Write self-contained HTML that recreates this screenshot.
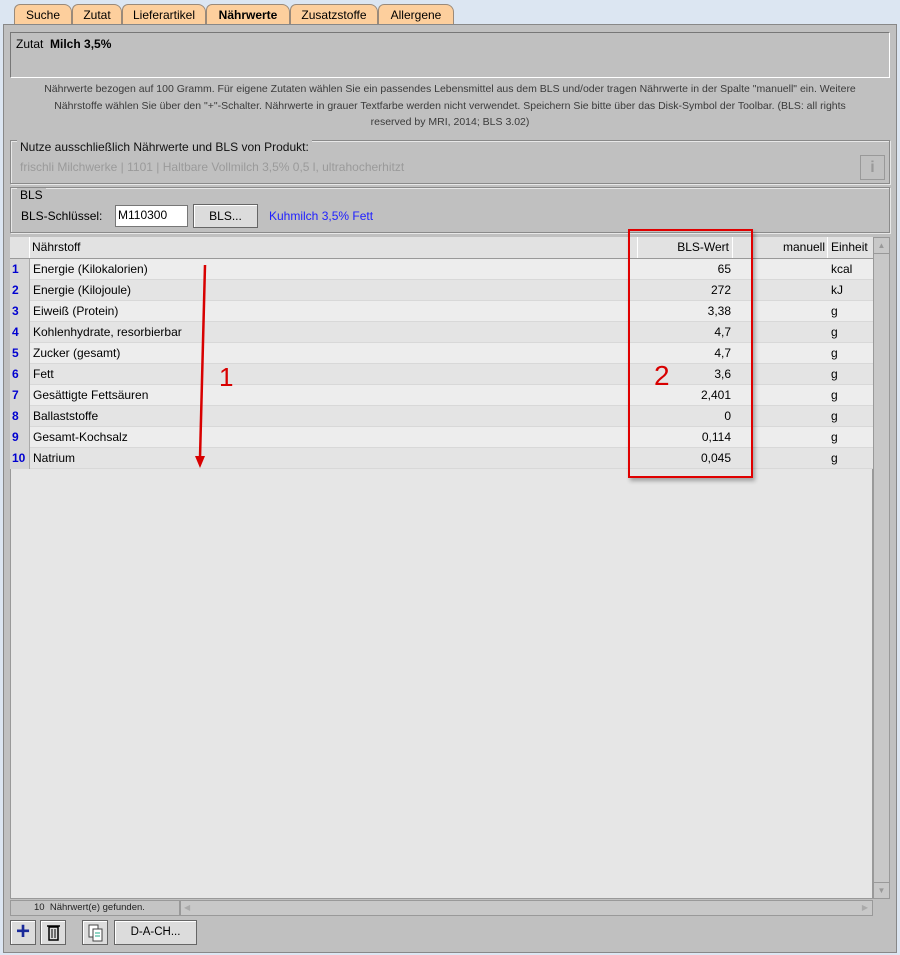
<!DOCTYPE html>
<html><head><meta charset="utf-8"><style>
*{box-sizing:border-box;margin:0;padding:0}
body{width:900px;height:955px;background:#dce6f2;font-family:"Liberation Sans",Arial,sans-serif;font-size:12px;color:#000;position:relative;overflow:hidden}
.a{position:absolute}
.tab{position:absolute;top:4px;height:21px;background:#fdcf9d;border:1px solid #9a8a7a;border-bottom:none;border-radius:6px 8px 0 0;font-size:12px;text-align:center;line-height:20px;color:#000}
.main{left:3px;top:24px;width:894px;height:929px;background:#c0c0c0;border:1px solid #888}
.fs{border:1px solid #8a8a8a;box-shadow:inset 1px 1px 0 #e8e8e8, 1px 1px 0 #e8e8e8}
.row{position:absolute;left:10px;width:863px;height:21px;font-size:12px;line-height:21px;border-bottom:1px solid #d8d8d8}
.row span{position:absolute;top:0}
.n{left:0;width:20px;height:21px;background:#d6d6d6;border-right:1px solid #aaa;color:#0000d0;font-weight:bold;padding-left:2px}
.btn{position:absolute;background:#dcdcdc;border:1px solid #666;box-shadow:inset 1px 1px 0 #fff}
</style></head><body>
<div class="tab" style="left:14px;width:58px">Suche</div>
<div class="tab" style="left:72px;width:50px">Zutat</div>
<div class="tab" style="left:122px;width:84px">Lieferartikel</div>
<div class="tab" style="left:206px;width:84px;font-weight:bold">Nährwerte</div>
<div class="tab" style="left:290px;width:88px">Zusatzstoffe</div>
<div class="tab" style="left:378px;width:76px">Allergene</div>
<div class="a main"></div>
<div class="a" style="left:10px;top:32px;width:880px;height:46px;border:1px solid #777;border-bottom-color:#fff;border-right-color:#fff;padding:4px 5px;font-size:12px">Zutat&nbsp; <b>Milch 3,5%</b></div>
<div class="a" style="left:0;top:81px;width:900px;text-align:center;font-size:10.5px;line-height:16.5px;color:#3a3a3a;white-space:nowrap">Nährwerte bezogen auf 100 Gramm. Für eigene Zutaten wählen Sie ein passendes Lebensmittel aus dem BLS und/oder tragen Nährwerte in der Spalte "manuell" ein. Weitere<br>Nährstoffe wählen Sie über den "+"-Schalter. Nährwerte in grauer Textfarbe werden nicht verwendet. Speichern Sie bitte über das Disk-Symbol der Toolbar. (BLS: all rights<br>reserved by MRI, 2014; BLS 3.02)</div>
<div class="a fs" style="left:10px;top:140px;width:880px;height:44px"></div>
<div class="a" style="left:17px;top:140px;background:#c0c0c0;padding:0 3px;font-size:12px;line-height:14px;color:#111">Nutze ausschließlich Nährwerte und BLS von Produkt:</div>
<div class="a" style="left:20px;top:160px;font-size:12px;color:#9a9a9a">frischli Milchwerke | 1101 | Haltbare Vollmilch 3,5% 0,5 l, ultrahocherhitzt</div>
<div class="a" style="left:860px;top:155px;width:25px;height:25px;border:1px solid #999;color:#999;font-weight:bold;font-size:16px;text-align:center;line-height:23px">i</div>
<div class="a fs" style="left:10px;top:187px;width:880px;height:46px"></div>
<div class="a" style="left:17px;top:188px;background:#c0c0c0;padding:0 3px;font-size:12px;line-height:14px">BLS</div>
<div class="a" style="left:21px;top:209px;font-size:12px">BLS-Schlüssel:</div>
<div class="a" style="left:115px;top:205px;width:73px;height:22px;background:#fff;border:1px solid #777;padding:2px 2px;font-size:12px">M110300</div>
<div class="btn" style="left:193px;top:204px;width:65px;height:24px;text-align:center;line-height:22px">BLS...</div>
<div class="a" style="left:269px;top:209px;color:#2020ff">Kuhmilch 3,5% Fett</div>
<div class="a" style="left:10px;top:237px;width:863px;height:662px;background:#e6e6e6;border:1px solid #999"></div>
<div class="a" style="left:10px;top:237px;width:863px;height:22px;background:#e2e2e2;border-bottom:1px solid #999;font-size:12px;line-height:20px">
<span class="a" style="left:0;width:20px;height:21px;border-right:1px solid #fff"></span>
<span class="a" style="left:22px">Nährstoff</span>
<span class="a" style="left:627px;width:96px;height:21px;border-left:1px solid #fff;border-right:1px solid #fff;text-align:right;padding-right:3px">BLS-Wert</span>
<span class="a" style="left:723px;width:95px;text-align:right;padding-right:2px;border-right:1px solid #fff;height:21px">manuell</span>
<span class="a" style="left:821px">Einheit</span>
</div>
<div class="row" style="top:259px;background:#ededed"><span class="n">1</span><span style="left:23px">Energie (Kilokalorien)</span><span style="left:627px;width:94px;text-align:right">65</span><span style="left:821px">kcal</span></div>
<div class="row" style="top:280px;background:#e4e4e4"><span class="n">2</span><span style="left:23px">Energie (Kilojoule)</span><span style="left:627px;width:94px;text-align:right">272</span><span style="left:821px">kJ</span></div>
<div class="row" style="top:301px;background:#ededed"><span class="n">3</span><span style="left:23px">Eiweiß (Protein)</span><span style="left:627px;width:94px;text-align:right">3,38</span><span style="left:821px">g</span></div>
<div class="row" style="top:322px;background:#e4e4e4"><span class="n">4</span><span style="left:23px">Kohlenhydrate, resorbierbar</span><span style="left:627px;width:94px;text-align:right">4,7</span><span style="left:821px">g</span></div>
<div class="row" style="top:343px;background:#ededed"><span class="n">5</span><span style="left:23px">Zucker (gesamt)</span><span style="left:627px;width:94px;text-align:right">4,7</span><span style="left:821px">g</span></div>
<div class="row" style="top:364px;background:#e4e4e4"><span class="n">6</span><span style="left:23px">Fett</span><span style="left:627px;width:94px;text-align:right">3,6</span><span style="left:821px">g</span></div>
<div class="row" style="top:385px;background:#ededed"><span class="n">7</span><span style="left:23px">Gesättigte Fettsäuren</span><span style="left:627px;width:94px;text-align:right">2,401</span><span style="left:821px">g</span></div>
<div class="row" style="top:406px;background:#e4e4e4"><span class="n">8</span><span style="left:23px">Ballaststoffe</span><span style="left:627px;width:94px;text-align:right">0</span><span style="left:821px">g</span></div>
<div class="row" style="top:427px;background:#ededed"><span class="n">9</span><span style="left:23px">Gesamt-Kochsalz</span><span style="left:627px;width:94px;text-align:right">0,114</span><span style="left:821px">g</span></div>
<div class="row" style="top:448px;background:#e4e4e4"><span class="n">10</span><span style="left:23px">Natrium</span><span style="left:627px;width:94px;text-align:right">0,045</span><span style="left:821px">g</span></div>
<div class="a" style="left:873px;top:237px;width:17px;height:662px;background:#c8c8c8;border:1px solid #999;color:#999;font-size:8px;text-align:center">
<div style="height:16px;border-bottom:1px solid #999;line-height:16px">▲</div>
<div style="position:absolute;bottom:0;width:15px;height:16px;border-top:1px solid #999;line-height:16px">▼</div></div>
<div class="a" style="left:10px;top:900px;width:170px;height:16px;background:#c4c4c4;border:1px solid #999;font-size:9.5px;line-height:14px;padding-left:23px;color:#222">10&nbsp; Nährwert(e) gefunden.</div>
<div class="a" style="left:180px;top:900px;width:693px;height:16px;background:#c8c8c8;border:1px solid #999;font-size:8px;color:#aaa;line-height:14px"><span style="position:absolute;left:3px">◀</span><span style="position:absolute;right:4px">▶</span></div>
<div class="btn" style="left:10px;top:920px;width:26px;height:25px;text-align:center;color:#1a2a9a;font-size:24px;font-weight:bold;line-height:22px">+</div>
<div class="btn" style="left:40px;top:920px;width:26px;height:25px"><svg width="24" height="23"><rect x="8" y="6" width="9" height="13" fill="none" stroke="#000" stroke-width="1.5"/><line x1="6" y1="5" x2="19" y2="5" stroke="#000" stroke-width="1.5"/><line x1="11" y1="8" x2="11" y2="17" stroke="#000"/><line x1="14" y1="8" x2="14" y2="17" stroke="#000"/></svg></div>
<div class="btn" style="left:82px;top:920px;width:26px;height:25px"><svg width="24" height="23"><rect x="6" y="4" width="9" height="12" fill="#fff" stroke="#444"/><rect x="10" y="8" width="9" height="12" fill="#fff" stroke="#444"/><line x1="12" y1="12" x2="17" y2="12" stroke="#2a8"/><line x1="12" y1="15" x2="17" y2="15" stroke="#2a8"/></svg></div>
<div class="btn" style="left:114px;top:920px;width:83px;height:25px;text-align:center;line-height:23px;font-size:11.5px">D-A-CH...</div>
<div class="a" style="left:628px;top:229px;width:125px;height:249px;border:2px solid #e00000;box-shadow:2px 3px 4px rgba(0,0,0,.3)"></div>
<svg class="a" style="left:190px;top:260px" width="30" height="212"><line x1="15" y1="5" x2="10" y2="198" stroke="#d80000" stroke-width="2.5"/><polygon points="5,196 15,196 10,208" fill="#d80000"/></svg>
<div class="a" style="left:219px;top:362px;color:#d80000;font-size:26px">1</div>
<div class="a" style="left:654px;top:360px;color:#d80000;font-size:28px">2</div>
</body></html>
